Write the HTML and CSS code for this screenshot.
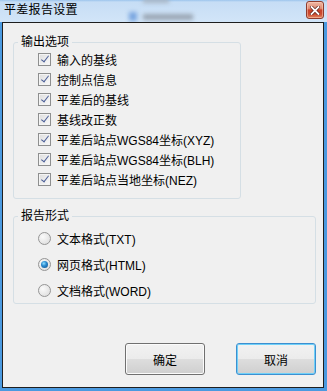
FILE: index.html
```html
<!DOCTYPE html>
<html>
<head>
    <meta charset="UTF-8">
    <title>平差报告设置</title>
    <link rel="stylesheet" href="styles.css">
</head>
<body>
<div class="window">
    <!-- 标题栏 -->
    <div class="titlebar">
        <span class="title">平差报告设置</span>
        <span class="glass glass-a"></span>
        <span class="glass glass-b"></span>
        <span class="glass glass-c"></span>
        <span class="close-btn">
            <svg width="10" height="9" viewBox="0 0 10 9">
                <path d="M1.5 1 L8.5 8 M8.5 1 L1.5 8" stroke="#5a1d14" stroke-width="3.2" stroke-linecap="square"/>
                <path d="M1.5 1 L8.5 8 M8.5 1 L1.5 8" stroke="#fff" stroke-width="1.8" stroke-linecap="square"/>
            </svg>
        </span>
    </div>
    <div class="frame">
        <div class="client">
            <fieldset class="group group-output">
                <legend>输出选项</legend>
                <ul class="opts">
                    <li><span class="check"></span>输入的基线</li>
                    <li><span class="check"></span>控制点信息</li>
                    <li><span class="check"></span>平差后的基线</li>
                    <li><span class="check"></span>基线改正数</li>
                    <li><span class="check"></span>平差后站点WGS84坐标(XYZ)</li>
                    <li><span class="check"></span>平差后站点WGS84坐标(BLH)</li>
                    <li><span class="check"></span>平差后站点当地坐标(NEZ)</li>
                </ul>
            </fieldset>
            <fieldset class="group group-format">
                <legend>报告形式</legend>
                <ul class="radios">
                    <li><span class="radio"></span>文本格式(TXT)</li>
                    <li><span class="radio on"></span>网页格式(HTML)</li>
                    <li><span class="radio"></span>文档格式(WORD)</li>
                </ul>
            </fieldset>
            <div class="buttons">
                <button class="btn">确定</button>
                <button class="btn btn-focus">取消</button>
            </div>
        </div>
    </div>
</div>
</body>
</html>
```
FILE: styles.css
```css
html,
body {
    margin: 0;
    padding: 0;
}

body {
    font-family: "Liberation Sans", "Noto Sans CJK SC", sans-serif;
    font-size: 12px;
    color: #000;
}

ul {
    margin: 0;
    padding: 0;
    list-style: none;
}

.window {
    width: 327px;
    height: 391px;
    background: #cde1f6;
}

.titlebar {
    height: 22px;
    display: flex;
    position: relative;
    background: linear-gradient(#9cc4ec 0, #c6ddf5 2px, #d2e5f8 22px);
    overflow: hidden;
}

.title {
    padding-left: 4px;
    line-height: 20px;
    letter-spacing: 0.3px;
    position: relative;
    z-index: 1;
}

/* 毛玻璃后面透出来的东西 */
.glass {
    position: absolute;
    filter: blur(2px);
}

.glass-a {
    left: 143px;
    top: -2px;
    width: 26px;
    height: 5px;
    background: #a9b6c4;
}

.glass-b {
    left: 143px;
    top: 14px;
    width: 50px;
    height: 6px;
    background: #9aa6b4;
}

.glass-c {
    left: 129px;
    top: 12px;
    width: 8px;
    height: 9px;
    background: #7aa6e0;
}

.close-btn {
    margin-left: auto;
    margin-right: 3px;
    margin-top: 1px;
    width: 18px;
    height: 18px;
    box-sizing: border-box;
    border: 1px solid #8e3b2d;
    border-radius: 3px;
    background: linear-gradient(#f0b9a6 0, #e08c74 40%, #c8402a 50%, #cc4a30 75%, #e2865f 100%);
    box-shadow: inset 0 0 0 1px rgba(255, 210, 190, 0.5);
    display: flex;
    align-items: center;
    justify-content: center;
    position: relative;
    z-index: 1;
}

.frame {
    height: 369px;
    box-sizing: border-box;
    padding: 0 3px 3px 2px;
    background: #4b9ae0;
}

.client {
    height: 100%;
    box-sizing: border-box;
    border: 1px solid #1e1e1e;
    background: #f0f0f0;
    padding: 12px 0 0 10px;
}

.group {
    margin: 0;
    padding: 0;
    border: 1px solid #d5dfe5;
    border-radius: 3px;
    box-sizing: border-box;
    min-width: 0;
}

.group legend {
    margin-left: 4px;
    padding: 0 3px;
    line-height: 14px;
}

.group-output {
    width: 228px;
    padding-bottom: 9px;
}

.group-format {
    width: 303px;
    margin-top: 10px;
    padding-top: 2px;
}

.opts li,
.radios li {
    display: flex;
    align-items: center;
    padding-left: 24px;
}

.opts li {
    height: 20px;
}

.radios li {
    height: 26px;
}

.check {
    width: 13px;
    height: 13px;
    box-sizing: border-box;
    margin-right: 6px;
    border: 1px solid #8e8f8f;
    background: linear-gradient(135deg, #dcdcdc, #fbfbfb);
    box-shadow: inset 0 0 0 1px #f4f4f4;
    position: relative;
}

.check::after {
    content: "";
    position: absolute;
    left: 3.5px;
    top: 0.5px;
    width: 3px;
    height: 7px;
    border: solid #4c5f98;
    border-width: 0 1.6px 1.6px 0;
    transform: rotate(38deg);
}

.radio {
    width: 13px;
    height: 13px;
    box-sizing: border-box;
    margin-right: 6px;
    border: 1px solid #959595;
    border-radius: 50%;
    background: radial-gradient(circle at 35% 35%, #fafafa, #d9d9d9);
    position: relative;
}

.radio.on::after {
    content: "";
    position: absolute;
    left: 2px;
    top: 2px;
    width: 7px;
    height: 7px;
    border-radius: 50%;
    background: radial-gradient(circle at 40% 35%, #8fe0ff 0, #2a8ad0 40%, #0d4d86 100%);
}

.buttons {
    display: flex;
    justify-content: flex-end;
    gap: 31px;
    margin-top: 39px;
    padding-right: 7px;
}

.btn {
    width: 80px;
    height: 32px;
    padding: 0;
    font-family: inherit;
    font-size: 12px;
    color: #000;
    border: 1px solid #707070;
    border-radius: 3px;
    background: linear-gradient(#f2f2f2 0, #ebebeb 50%, #dddddd 51%, #cfcfcf 100%);
    box-shadow: inset 0 0 0 1px #fbfbfb;
}

.btn-focus {
    border-color: #3c8fd0;
    box-shadow: inset 0 0 0 1px #6fd0f8;
}
```
